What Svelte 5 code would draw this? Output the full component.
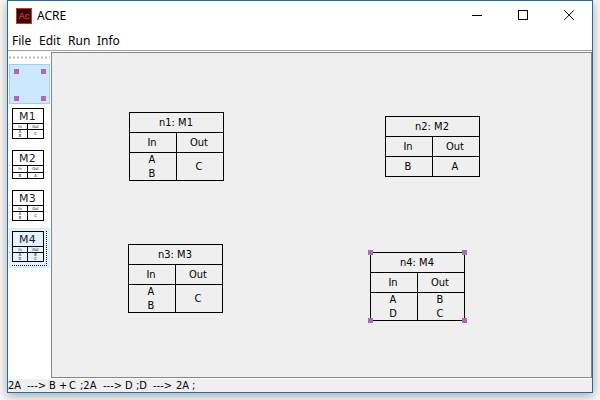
<script>
  const nodes = [
    { id: 'n1', type: 'M1', x: 129, y: 112, ins: ['A', 'B'], outs: ['C'] },
    { id: 'n2', type: 'M2', x: 385, y: 116, ins: ['B'], outs: ['A'] },
    { id: 'n3', type: 'M3', x: 128, y: 244, ins: ['A', 'B'], outs: ['C'] },
    { id: 'n4', type: 'M4', x: 370, y: 252, ins: ['A', 'D'], outs: ['B', 'C'], selected: true }
  ];
  const palette = [
    { name: 'M1', h: 31, gap: 4, head: 6, ins: ['A', 'B'], outs: ['C'] },
    { name: 'M2', h: 29, gap: 11, head: 7, ins: ['B'], outs: ['A'] },
    { name: 'M3', h: 31, gap: 11, head: 6, ins: ['A', 'B'], outs: ['C'] },
    { name: 'M4', h: 31, gap: 10, head: 6, ins: ['A', 'D'], outs: ['B', 'C'], selected: true }
  ];
  const status = ['2A', '--->', 'B', '+', 'C', ';2A', '--->', 'D', ';D', '--->', '2A', ';'];
</script>

<div class="desktop">
  <div class="window">
    <header class="title">
      <svg class="logo" width="16" height="16" viewBox="0 0 16 16">
        <rect x=".5" y=".5" width="15" height="15" fill="#310003" stroke="#cf3037" />
        <text x="8" y="11" text-anchor="middle" font-size="9" fill="#dc383c" stroke="#dc383c" stroke-width=".25">Ac</text>
      </svg>
      <span class="name">ACRE</span>
      <div class="controls">
        <svg width="11" height="11"><path d="M0 5.5H10" stroke="#000" /></svg>
        <svg width="11" height="11"><rect x=".5" y=".5" width="9" height="9" fill="none" stroke="#000" /></svg>
        <svg width="11" height="11"><path d="M.3.3 9.9 9.9M9.9.3.3 9.9" stroke="#000" /></svg>
      </div>
    </header>
    <nav><span class="file">File</span><span class="edit">Edit</span><span class="run">Run</span><span class="info">Info</span></nav>
    <main>
      <aside>
        <svg class="grip" width="42" height="3"><path d="M1 1.5H42" stroke="#bcbcbc" stroke-width="2" stroke-dasharray="2 2" /></svg>
        <div class="select-tool"><i></i><i></i><i></i><i></i></div>
        {#each palette as p}
          <div class="thumb" class:selected={p.selected} style:height="{p.h}px" style:margin-top="{p.gap}px">
            <div class="thumb-name">{p.name}</div>
            <div class="thumb-row" style:height="{p.head}px"><span>In</span><span>Out</span></div>
            <div class="thumb-row rest">
              <span>{#each p.ins as t}<b>{t}</b>{/each}</span>
              <span>{#each p.outs as t}<b>{t}</b>{/each}</span>
            </div>
          </div>
        {/each}
      </aside>
      <section class="canvas">
        {#each nodes as n}
          <div class="node" style:left="{n.x - 52}px" style:top="{n.y - 53}px">
            <div class="head">{n.id}: {n.type}</div>
            <div class="row heads"><span>In</span><span>Out</span></div>
            <div class="row ports" class:double={n.ins.length > 1}>
              <span>{#each n.ins as t}<b>{t}</b>{/each}</span>
              <span>{#each n.outs as t}<b>{t}</b>{/each}</span>
            </div>
            {#if n.selected}<i class="tl"></i><i class="tr"></i><i class="bl"></i><i class="br"></i>{/if}
          </div>
        {/each}
      </section>
    </main>
    <footer>{#each status as s}<span>{s}</span>{/each}</footer>
  </div>
</div>

<style>
  .desktop { box-sizing: border-box; width: 600px; height: 400px; padding: 0 7px 7px; background: #f7f7f7; overflow: hidden; color: #000; font: 11px "DejaVu Sans Condensed", "DejaVu Sans", sans-serif; }
  .window { box-sizing: border-box; width: 586px; height: 393px; border: 1px solid #1770b3; background: #fff; display: flex; flex-direction: column; box-shadow: 0 3px 10px rgba(0, 0, 0, .32); position: relative; z-index: 0; }
  .title { height: 29px; flex: none; display: flex; align-items: center; padding: 0 17px 0 8px; box-sizing: border-box; font: 13px "Noto Sans", sans-serif; }
  .logo { font-family: "Liberation Sans", sans-serif; display: block; }
  .name { margin-left: 5px; font-size: 12px; }
  .controls { margin-left: auto; display: flex; gap: 35px; }
  .controls svg { display: block; }
  nav { height: 20px; flex: none; border-bottom: 1px solid #a0a0a0; display: flex; font: 12px/21px "Noto Sans", sans-serif; padding-left: 4px; box-sizing: content-box; }
  nav span { flex: none; white-space: nowrap; }
  .file { width: 27px; } .edit { width: 29px; } .run { width: 29px; }
  main { height: 328px; flex: none; display: flex; }
  aside { width: 43px; flex: none; display: flex; flex-direction: column; align-items: flex-start; padding-top: 5px; box-sizing: border-box; }
  .grip { display: block; flex: none; margin-bottom: 5px; }
  .select-tool { width: 41px; height: 40px; flex: none; margin-left: 1px; padding: 4px 3px 2px 4px; box-sizing: border-box; border: 1px solid #99d1ff; background: #cce8ff; display: grid; grid-template-columns: 27px 5px; grid-template-rows: 27px 5px; }
  i { display: block; width: 5px; height: 5px; background: #b565b5; }
  .thumb { box-sizing: border-box; width: 32px; flex: none; margin-left: 4px; border: 1px solid #000; display: flex; flex-direction: column; position: relative; }
  .thumb-name { height: 14px; flex: none; font: 11px/15px "DejaVu Sans", sans-serif; text-align: center; letter-spacing: .2px; padding-right: 1px; color: #1a1a2e; }
  .thumb-row { display: flex; box-sizing: border-box; flex: none; border-top: 1px solid #000; }
  .thumb-row span { flex: 1; display: flex; flex-direction: column; justify-content: center; align-items: center; font-size: 4px; line-height: 4px; }
  .thumb-row span:first-child { flex: 0 0 14px; border-right: 1px solid #000; }
  .rest { flex: 1; }
  .thumb.selected::before { content: ""; position: absolute; z-index: -1; left: -4px; top: -4px; width: 41px; height: 40px; background: #e5f3ff; box-sizing: border-box; border: 1px solid #d5ebfb; }
  .thumb.selected::after { content: ""; position: absolute; left: -1px; top: -1px; width: 34px; height: 34px; border: 1px dotted #000; border-top: 0; border-left: 0; }
  .canvas { width: 541px; box-sizing: border-box; border: 1px solid #828790; margin-top: 1px; height: 326px; background: #efefef; position: relative; }
  .node { box-sizing: border-box; position: absolute; width: 95px; border: 1px solid #000; }
  .head { height: 19px; line-height: 20px; text-align: center; padding-right: 1px; }
  .row { display: flex; box-sizing: border-box; height: 20px; border-top: 1px solid #000; }
  .row span { flex: 1; display: flex; flex-direction: column; align-items: center; justify-content: center; line-height: 14px; padding-right: 2px; }
  .row span:first-child { box-sizing: border-box; flex: 0 0 47px; border-right: 1px solid #000; }
  b { display: block; font-weight: inherit; }
  .double { height: 28px; }
  .node i { position: absolute; }
  .tl { left: -3px; top: -3px; } .tr { right: -3px; top: -3px; } .bl { left: -3px; bottom: -3px; } .br { right: -3px; bottom: -3px; }
  footer { flex: 1; background: #efefef; display: grid; grid-template-columns: 19px 22px 10px 10px 11px 23px 22px 11px 17px 23px 16px 5px; line-height: 13px; white-space: nowrap; }
</style>
